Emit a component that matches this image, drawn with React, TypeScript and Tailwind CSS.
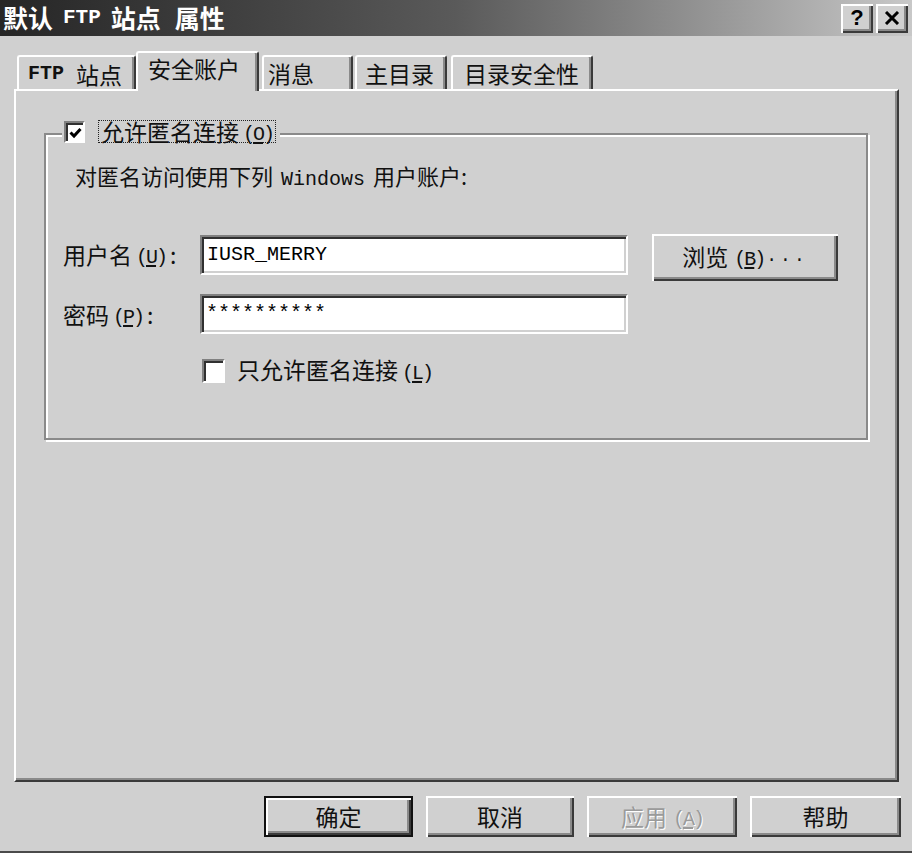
import React from "react";

const CJK = { fontFamily: '"Noto Sans CJK SC", "Noto Sans", sans-serif' };
const MONO = { fontFamily: '"Liberation Mono", "Noto Sans CJK SC", monospace' };

function Acc({ k }: { k: string }) {
  return (
    <span className="text-[20px] tracking-[-2px]" style={MONO}>
      (<span className="underline underline-offset-2">{k}</span>)
    </span>
  );
}

function Tab({
  children,
  selected,
  className,
}: {
  children: React.ReactNode;
  selected?: boolean;
  className: string;
}) {
  return (
    <div
      className={
        "flex items-center bg-[#d0d0d0] rounded-t-[3px] border-t-2 border-l-2 border-r-2 border-t-white border-l-white border-r-[#3a3a3a] shadow-[inset_-2px_0_0_#8a8a8a] text-[23px] text-[#111] " +
        (selected ? "h-[40px] -mb-[2px] relative z-10 " : "h-[34px] ") +
        className
      }
    >
      {children}
    </div>
  );
}

function Btn({
  children,
  className,
  def,
  disabled,
}: {
  children: React.ReactNode;
  className: string;
  def?: boolean;
  disabled?: boolean;
}) {
  return (
    <div
      className={
        "flex items-center justify-center bg-[#d0d0d0] " +
        (def ? "border-2 border-[#111] " : "") +
        "shadow-[inset_2px_2px_0_#fff,inset_-2px_-2px_0_#3a3a3a,inset_-4px_-4px_0_#8a8a8a] text-[23px] " +
        (disabled ? "text-[#9a9a9a] [text-shadow:1px_1px_0_#fff] " : "text-[#111] ") +
        className
      }
    >
      {children}
    </div>
  );
}

export default function App() {
  return (
    <div
      className="w-[912px] h-[853px] bg-[#d0d0d0] flex flex-col overflow-hidden border-b-2 border-[#4a4a4a]"
      style={CJK}
    >
      {/* Title bar */}
      <div className="h-[36px] shrink-0 flex items-center justify-between pl-[3px] pr-[3px] bg-gradient-to-r from-[#262626] via-[#5a5a5a] to-[#c8c8c8]">
        <div className="text-white font-bold text-[25px] leading-none flex items-center gap-[10px] -mt-[2px]">
          <span>默认</span>
          <span className="text-[21px] font-bold" style={MONO}>
            FTP
          </span>
          <span>站点</span>
          <span className="ml-[4px]">属性</span>
        </div>
        <div className="flex items-center gap-[3px] pr-[1px]">
          <div className="w-[32px] h-[29px] bg-[#d0d0d0] flex items-center justify-center shadow-[inset_2px_2px_0_#fff,inset_-2px_-2px_0_#3a3a3a,inset_-4px_-4px_0_#8a8a8a] text-[22px] font-bold text-black leading-none" style={{ fontFamily: '"Liberation Sans", sans-serif' }}>
            ?
          </div>
          <div className="w-[32px] h-[29px] bg-[#d0d0d0] flex items-center justify-center shadow-[inset_2px_2px_0_#fff,inset_-2px_-2px_0_#3a3a3a,inset_-4px_-4px_0_#8a8a8a]">
            <svg width="16" height="14" viewBox="0 0 16 14">
              <path d="M2 1 L14 13 M14 1 L2 13" stroke="#000" strokeWidth="3" />
            </svg>
          </div>
        </div>
      </div>

      {/* Tabs */}
      <div className="flex items-end h-[53px] shrink-0 pl-[17px]">
        <Tab className="w-[119px] pl-[9px] pt-[2px]">
          <span className="text-[20px] font-bold" style={MONO}>FTP</span>
          <span className="ml-[12px]">站点</span>
        </Tab>
        <Tab selected className="w-[123px] pl-[10px] pb-[8px]">
          安全账户
        </Tab>
        <Tab className="w-[91px] ml-[3px] pl-[4px]">消息</Tab>
        <Tab className="w-[92px] ml-[2px] pl-[8px]">主目录</Tab>
        <Tab className="w-[142px] ml-[4px] pl-[11px]">目录安全性</Tab>
      </div>

      {/* Panel */}
      <div className="ml-[14px] w-[885px] h-[693px] shrink-0 border-2 border-t-white border-l-white border-r-[#3a3a3a] border-b-[#3a3a3a] shadow-[inset_-2px_-2px_0_#8a8a8a] pl-[28px] pt-[42px]">
        {/* Group box */}
        <div className="relative w-[824px] h-[307px] border-2 border-[#8a8a8a] shadow-[inset_2px_2px_0_#fff,2px_2px_0_#fff] pl-[17px] pt-[25px]">
          {/* legend */}
          <div className="absolute left-[16px] -top-[15px] flex items-center bg-[#d0d0d0] pl-[2px] pr-[4px]">
            <div className="w-[21px] h-[22px] bg-white border-2 border-t-[#808080] border-l-[#808080] border-b-white border-r-white shadow-[inset_2px_2px_0_#303030] flex items-center justify-center">
              <svg width="13" height="12" viewBox="0 0 13 12" className="ml-[2px] mt-[2px]">
                <path d="M1.5 5.5 L5 9 L11.5 2" stroke="#000" strokeWidth="3" fill="none" />
              </svg>
            </div>
            <div className="ml-[13px] h-[23px] px-[2px] border border-dotted border-[#222] flex items-center text-[23px] text-[#111] leading-none">
              允许匿名连接<span className="ml-[4px]"><Acc k="O" /></span>
            </div>
          </div>

          <div className="text-[22px] text-[#111] leading-[30px] pl-[12px]">
            对匿名访问使用下列
            <span className="text-[20px] mx-[8px]" style={MONO}>Windows</span>
            用户账户:
          </div>

          {/* Row 1 */}
          <div className="flex items-start mt-[39px]">
            <div className="w-[137px] h-[40px] flex items-center text-[23px] text-[#111]">
              用户名<span className="ml-[4px]"><Acc k="U" /></span>
              <span className="ml-[4px]">:</span>
            </div>
            <div className="mt-[1px] w-[428px] h-[40px] bg-white border-2 border-t-[#808080] border-l-[#808080] border-b-white border-r-white shadow-[inset_2px_2px_0_#303030,inset_-2px_-2px_0_#d0d0d0] flex items-center pl-[5px] text-[20px] text-black" style={MONO}>
              IUSR_MERRY
            </div>
            <Btn className="ml-[24px] w-[186px] h-[47px] pb-[2px]">
              浏览<span className="ml-[6px]"><Acc k="B" /></span>
              <span className="text-[18px] tracking-[3px] ml-[2px]" style={MONO}>...</span>
            </Btn>
          </div>

          {/* Row 2 */}
          <div className="flex items-start mt-[13px]">
            <div className="w-[137px] h-[40px] flex items-center text-[23px] text-[#111]">
              密码<span className="ml-[4px]"><Acc k="P" /></span>
              <span className="ml-[4px]">:</span>
            </div>
            <div className="w-[428px] h-[40px] bg-white border-2 border-t-[#808080] border-l-[#808080] border-b-white border-r-white shadow-[inset_2px_2px_0_#303030,inset_-2px_-2px_0_#d0d0d0] flex items-center pl-[4px] text-[20px] text-black" style={MONO}>
              **********
            </div>
          </div>

          {/* Row 3 */}
          <div className="flex items-center mt-[24px] ml-[139px]">
            <div className="w-[23px] h-[24px] bg-white border-2 border-t-[#808080] border-l-[#808080] border-b-white border-r-white shadow-[inset_2px_2px_0_#303030]" />
            <div className="ml-[12px] text-[23px] text-[#111] leading-none">
              只允许匿名连接<span className="ml-[4px]"><Acc k="L" /></span>
            </div>
          </div>
        </div>
      </div>

      {/* Bottom buttons */}
      <div className="flex justify-end gap-[13px] pr-[11px] mt-[14px]">
        <Btn def className="w-[149px] h-[41px]">确定</Btn>
        <Btn className="w-[148px] h-[41px]">取消</Btn>
        <Btn disabled className="w-[150px] h-[41px]">
          应用<span className="ml-[6px]"><Acc k="A" /></span>
        </Btn>
        <Btn className="w-[151px] h-[41px]">帮助</Btn>
      </div>
    </div>
  );
}
